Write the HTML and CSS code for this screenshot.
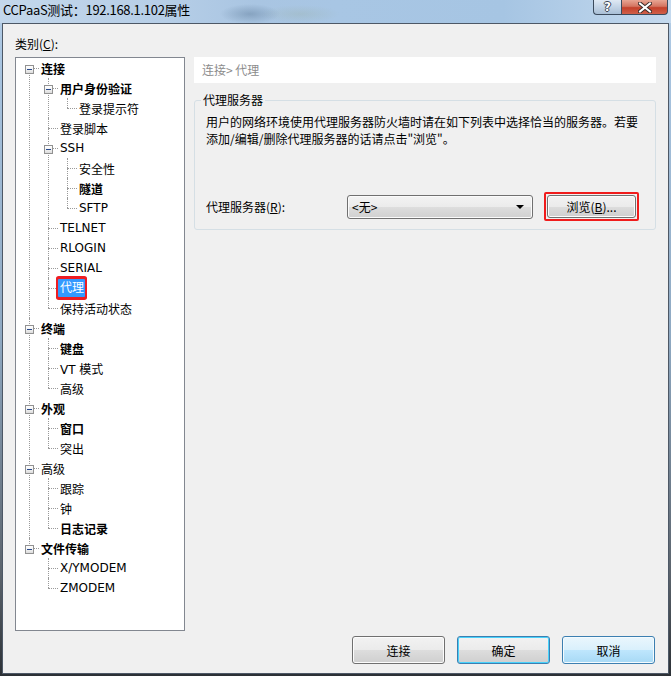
FILE: index.html
```html
<!DOCTYPE html>
<html lang="zh-CN">
<head>
<meta charset="utf-8">
<title>CCPaaS测试：192.168.1.102属性</title>
<link rel="stylesheet" href="styles.css">
</head>
<body>
<div class="window">
  <div class="titlebar">
    <span class="title">CCPaaS测试：192.168.1.102属性</span>
    <div class="caption-btns">
      <span class="cbtn help">?</span>
      <span class="cbtn close">
        <svg width="14" height="11" viewBox="0 0 14 11"><path d="M2 1.5 L12 9.5 M12 1.5 L2 9.5" stroke="#3a2a28" stroke-width="4" stroke-linecap="square"/><path d="M2 1.5 L12 9.5 M12 1.5 L2 9.5" stroke="#fff" stroke-width="2" stroke-linecap="square"/></svg>
      </span>
    </div>
  </div>
  <div class="client">
    <div class="main">
      <div class="left">
        <div class="cat-label">类别(<u>C</u>):</div>
        <div class="tree">
          <ul>
            <li><div class="node b"><span class="exp"></span><span>连接</span></div>
              <ul>
                <li><div class="node b"><span class="exp"></span><span>用户身份验证</span></div>
                  <ul>
                    <li><div class="node"><span>登录提示符</span></div></li>
                  </ul>
                </li>
                <li><div class="node"><span>登录脚本</span></div></li>
                <li><div class="node"><span class="exp"></span><span>SSH</span></div>
                  <ul>
                    <li><div class="node"><span>安全性</span></div></li>
                    <li><div class="node b"><span>隧道</span></div></li>
                    <li><div class="node"><span>SFTP</span></div></li>
                  </ul>
                </li>
                <li><div class="node"><span>TELNET</span></div></li>
                <li><div class="node"><span>RLOGIN</span></div></li>
                <li><div class="node"><span>SERIAL</span></div></li>
                <li><div class="node"><span class="sel">代理</span></div></li>
                <li><div class="node"><span>保持活动状态</span></div></li>
              </ul>
            </li>
            <li><div class="node b"><span class="exp"></span><span>终端</span></div>
              <ul>
                <li><div class="node b"><span>键盘</span></div></li>
                <li><div class="node"><span>VT 模式</span></div></li>
                <li><div class="node"><span>高级</span></div></li>
              </ul>
            </li>
            <li><div class="node b"><span class="exp"></span><span>外观</span></div>
              <ul>
                <li><div class="node b"><span>窗口</span></div></li>
                <li><div class="node"><span>突出</span></div></li>
              </ul>
            </li>
            <li><div class="node"><span class="exp"></span><span>高级</span></div>
              <ul>
                <li><div class="node"><span>跟踪</span></div></li>
                <li><div class="node"><span>钟</span></div></li>
                <li><div class="node b"><span>日志记录</span></div></li>
              </ul>
            </li>
            <li><div class="node b"><span class="exp"></span><span>文件传输</span></div>
              <ul>
                <li><div class="node"><span>X/YMODEM</span></div></li>
                <li><div class="node"><span>ZMODEM</span></div></li>
              </ul>
            </li>
          </ul>
        </div>
      </div>
      <div class="right">
        <div class="crumb">连接&gt; 代理</div>
        <fieldset class="group">
          <legend>代理服务器</legend>
          <p class="desc">用户的网络环境使用代理服务器防火墙时请在如下列表中选择恰当的服务器。若要<br>添加/编辑/删除代理服务器的话请点击"浏览"。</p>
          <div class="proxy-row">
            <label class="proxy-label">代理服务器(<u>R</u>):</label>
            <div class="combo"><span class="combo-text">&lt;无&gt;</span><span class="arrow"></span></div>
            <div class="hl"><button class="btn browse">浏览(<u>B</u>)...</button></div>
          </div>
        </fieldset>
      </div>
    </div>
    <div class="buttons">
      <button class="btn dlg">连接</button>
      <button class="btn dlg default">确定</button>
      <button class="btn dlg hover">取消</button>
    </div>
  </div>
</div>
</body>
</html>
```

FILE: styles.css
```css
html, body {
  margin: 0;
  padding: 0;
}
body {
  width: 671px;
  height: 676px;
  overflow: hidden;
  font-family: "Noto Sans CJK SC", sans-serif;
  font-size: 12px;
  color: #000;
}
.window {
  width: 671px;
  height: 676px;
  display: flex;
  flex-direction: column;
  background: linear-gradient(180deg, #b9d0e7 0%, #a9c5e1 8%, #8fa9c2 50%, #5b636c 85%, #2c3136 100%);
}
.titlebar {
  height: 23px;
  flex: none;
  display: flex;
  align-items: flex-start;
  background:
    radial-gradient(ellipse 30px 10px at 250px 14px, rgba(70, 100, 130, 0.35), rgba(70, 100, 130, 0) 100%),
    radial-gradient(ellipse 40px 9px at 300px 14px, rgba(150, 170, 150, 0.25), rgba(150, 170, 150, 0) 100%),
    linear-gradient(90deg, #c3d7eb 0%, #b6cee7 25%, #a9c5e2 38%, #a8c6e4 50%, #a6c5e3 75%, #c4d9ee 100%);
}
.title {
  font-size: 13px;
  line-height: 20px;
  padding-left: 3px;
  letter-spacing: -0.3px;
  color: #000;
  white-space: nowrap;
}
.caption-btns {
  margin-left: auto;
  margin-right: 3px;
  display: flex;
}
.cbtn {
  height: 15px;
  box-sizing: border-box;
  border: 1px solid #3b4a5c;
  border-top: none;
  display: flex;
  align-items: center;
  justify-content: center;
}
.help {
  width: 28px;
  border-right: none;
  border-radius: 0 0 0 4px;
  background: linear-gradient(180deg, #dfe9f4 0%, #c3d4e6 50%, #a9bfd6 100%);
  color: #fff;
  font-family: "DejaVu Sans", sans-serif;
  font-weight: bold;
  font-size: 12px;
  line-height: 13px;
  text-shadow: 1px 0 0 #3a4656, -1px 0 0 #3a4656, 0 1px 0 #3a4656, 0 -1px 0 #3a4656;
}
.close {
  width: 47px;
  border-radius: 0 0 4px 0;
  background: linear-gradient(180deg, #e8a593 0%, #d47561 45%, #c4402a 55%, #d0604a 100%);
}
.client {
  margin: 0 2px;
  height: 651px;
  box-sizing: border-box;
  border: 1px solid #4d5866;
  background: #f0f0f0;
  padding: 12px 12px 0 12px;
}
.main {
  display: grid;
  grid-template-columns: 170px 463px;
  column-gap: 8px;
}
.cat-label {
  line-height: 16px;
  height: 16px;
  margin-bottom: 5px;
}
.tree {
  height: 574px;
  box-sizing: border-box;
  border: 1px solid #828790;
  background: #fff;
  font-family: "DejaVu Sans", "Noto Sans CJK SC", sans-serif;
  font-size: 12px;
  overflow: hidden;
}
.tree ul {
  list-style: none;
  margin: 0;
  padding: 0 0 0 19px;
}
.tree > ul {
  padding-left: 0;
}
.tree li {
  position: relative;
}
.tree li::before {
  content: "";
  position: absolute;
  left: 13px;
  top: 10px;
  width: 10px;
  border-top: 1px dotted #9a9a9a;
}
.tree li::after {
  content: "";
  position: absolute;
  left: 13px;
  top: 0;
  bottom: 0;
  border-left: 1px dotted #9a9a9a;
}
.tree li:last-child::after {
  bottom: auto;
  height: 10px;
}
.tree > ul > li:first-child::after {
  top: 10px;
  height: auto;
}
.node {
  position: relative;
  height: 20px;
  display: flex;
  align-items: center;
  padding-left: 25px;
  white-space: nowrap;
}
.b {
  font-weight: bold;
}
.exp {
  position: absolute;
  left: 9px;
  top: 7px;
  width: 9px;
  height: 9px;
  box-sizing: border-box;
  border: 1px solid #919191;
  background: linear-gradient(180deg, #ffffff 0%, #f2f2f2 50%, #dcdcdc 100%);
  z-index: 2;
}
.exp::after {
  content: "";
  position: absolute;
  left: 1px;
  top: 3px;
  width: 5px;
  height: 1px;
  background: #2a4a8c;
}
.sel {
  background: #3399ff;
  color: #fff;
  height: 18px;
  line-height: 18px;
  padding: 0 1px 0 2px;
  margin-left: -2px;
  box-shadow: 0 0 0 2px #ee1d23, 0 1px 0 2px #ee1d23, 0 -1px 0 2px #ee1d23;
  border-radius: 1px;
}
.right {
  padding: 21px 0 0 1px;
}
.crumb {
  height: 26px;
  line-height: 26px;
  background: #fff;
  color: #8c8c8c;
  padding-left: 8px;
}
.group {
  margin: 9px 0 0 0;
  padding: 5px 11px 8px 11px;
  border: 1px solid #d5dfe5;
  border-radius: 3px;
  width: 462px;
  box-sizing: border-box;
  min-width: 0;
}
.group legend {
  font-size: 12px;
  line-height: 16px;
  padding: 0 2px;
  margin-left: -5px;
  color: #000;
}
.desc {
  margin: 0;
  line-height: 17px;
  white-space: nowrap;
}
.proxy-row {
  display: flex;
  align-items: center;
  height: 29px;
  margin-top: 45px;
}
.proxy-label {
  width: 141px;
  flex: none;
}
.combo {
  width: 186px;
  height: 24px;
  flex: none;
  box-sizing: border-box;
  border: 1px solid #707070;
  border-radius: 3px;
  background: linear-gradient(180deg, #f3f3f3 0%, #ebebeb 50%, #dddddd 51%, #d0d0d0 100%);
  box-shadow: inset 0 0 0 1px #fbfbfb;
  display: flex;
  align-items: center;
  padding-left: 4px;
}
.combo-text {
  font-size: 12px;
}
.arrow {
  margin-left: auto;
  margin-right: 8px;
  width: 0;
  height: 0;
  border-left: 4px solid transparent;
  border-right: 4px solid transparent;
  border-top: 4px solid #000;
}
.hl {
  margin-left: 11px;
  width: 95px;
  height: 29px;
  flex: none;
  box-sizing: border-box;
  border: 2px solid #f01c1c;
  border-radius: 2px;
  padding: 1px;
  display: flex;
}
.btn {
  font-family: "Noto Sans CJK SC", sans-serif;
  font-size: 12px;
  color: #000;
  border: 1px solid #707070;
  border-radius: 3px;
  background: linear-gradient(180deg, #f2f2f2 0%, #ebebeb 50%, #dddddd 51%, #cfcfcf 100%);
  box-shadow: inset 0 0 0 1px #fcfcfc;
  padding: 0;
  margin: 0;
  box-sizing: border-box;
}
.browse {
  flex: 1;
}
.buttons {
  display: flex;
  justify-content: flex-end;
  gap: 12px;
  margin-top: 5px;
  padding-right: 1px;
}
.dlg {
  width: 93px;
  height: 28px;
}
.default {
  border-color: #3c7fb1;
  box-shadow: inset 0 0 0 1px #48d2fb;
}
.hover {
  border-color: #3c7fb1;
  background: linear-gradient(180deg, #eaf6fd 0%, #d9f0fc 50%, #bee6fd 51%, #a7d9f5 100%);
  box-shadow: inset 0 0 0 1px #f4fbfe;
}
```
